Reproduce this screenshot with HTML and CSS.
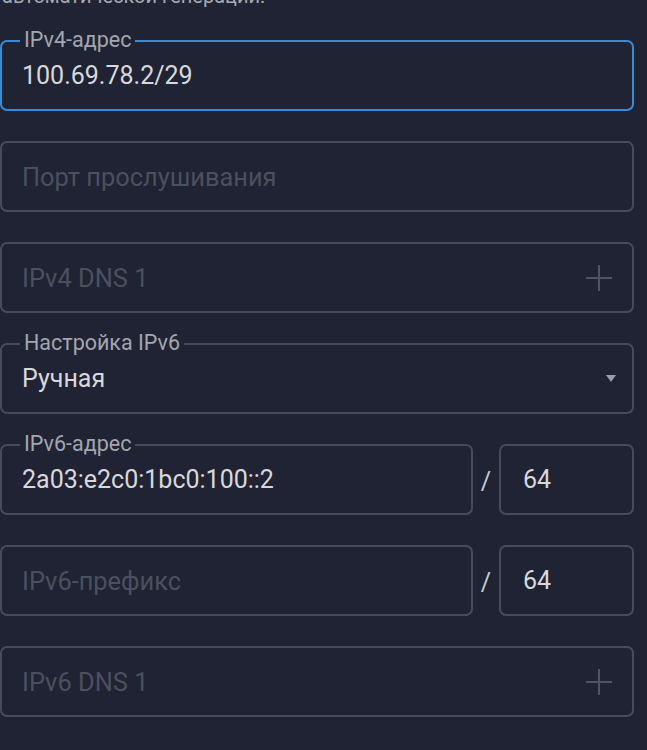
FILE: index.html
```html
<!DOCTYPE html>
<html lang="ru">
<head>
<meta charset="utf-8">
<link rel="stylesheet" href="styles.css">
</head>
<body>
<div class="form">
  <p class="hint">автоматической генерации.</p>

  <div class="field focused">
    <span class="label">IPv4-адрес</span>
    <span class="value">100.69.78.2/29</span>
  </div>

  <div class="field">
    <span class="placeholder">Порт прослушивания</span>
  </div>

  <div class="field">
    <span class="placeholder">IPv4 DNS 1</span>
    <svg class="plus" width="26" height="26" viewBox="0 0 26 26"><path d="M13 0v26M0 13h26" stroke="currentColor" stroke-width="2" fill="none"/></svg>
  </div>

  <div class="field">
    <span class="label">Настройка IPv6</span>
    <span class="value">Ручная</span>
    <svg class="caret" width="10" height="7" viewBox="0 0 10 7"><path d="M0 0h10L5 7z" fill="currentColor"/></svg>
  </div>

  <div class="split">
    <div class="field grow">
      <span class="label">IPv6-адрес</span>
      <span class="value">2a03:e2c0:1bc0:100::2</span>
    </div>
    <span class="slash">/</span>
    <div class="field small">
      <span class="value">64</span>
    </div>
  </div>

  <div class="split">
    <div class="field grow">
      <span class="placeholder">IPv6-префикс</span>
    </div>
    <span class="slash">/</span>
    <div class="field small">
      <span class="value">64</span>
    </div>
  </div>

  <div class="field">
    <span class="placeholder">IPv6 DNS 1</span>
    <svg class="plus" width="26" height="26" viewBox="0 0 26 26"><path d="M13 0v26M0 13h26" stroke="currentColor" stroke-width="2" fill="none"/></svg>
  </div>
</div>
</body>
</html>
```

FILE: styles.css
```css
html, body {
  margin: 0;
  padding: 0;
  background: #1f2334;
  height: 100%;
  overflow: hidden;
}

.form {
  font-family: Roboto, "Noto Sans", sans-serif;
  padding: 0 13px 0 0;
  display: flex;
  flex-direction: column;
  gap: 30px;
}

.hint {
  margin: -16px 0 2px 2px;
  font-size: 20px;
  line-height: 24px;
  color: #a7aab2;
}

.field {
  position: relative;
  box-sizing: border-box;
  height: 71px;
  border: 2px solid #474c59;
  border-radius: 7px;
  display: flex;
  align-items: center;
  padding: 0 20px 0 20px;
}

.field.focused {
  border-color: #3a8bd6;
}

.label {
  position: absolute;
  left: 18px;
  top: -13px;
  padding: 0 4px;
  background: #1f2334;
  font-size: 21.5px;
  line-height: 22px;
  color: #a3a6ae;
}

.value {
  font-size: 25px;
  color: #d8d8da;
}

.placeholder {
  font-size: 25.4px;
  color: #4b505e;
}

.plus {
  margin-left: auto;
  color: #4f5463;
}

.caret {
  margin-left: auto;
  margin-right: -4px;
  color: #9b9ea6;
}

.split {
  display: flex;
  align-items: center;
}

.grow {
  flex: 1;
}

.small {
  width: 135px;
  flex: none;
  padding-left: 22px;
}

.slash {
  width: 26px;
  text-align: center;
  font-size: 25px;
  color: #c9cacd;
  padding-top: 4px;
}
```
